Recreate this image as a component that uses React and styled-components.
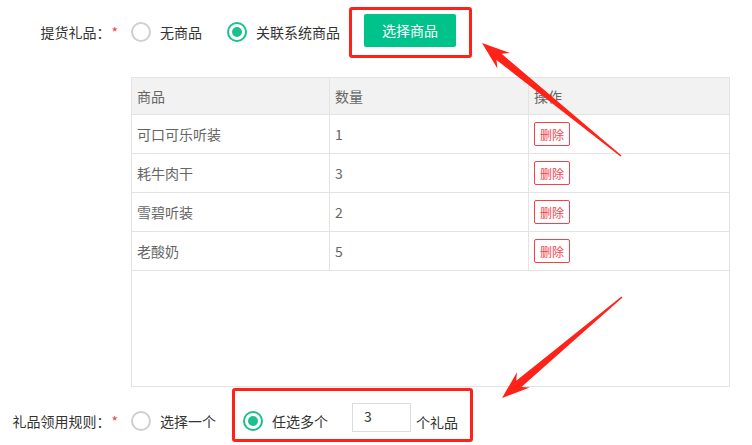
import React from 'react'
import styled, { createGlobalStyle } from 'styled-components'

const GlobalStyle = createGlobalStyle`
    body {
        margin: 0;
        background: #fff;
        font-family: 'Noto Sans CJK SC', 'Noto Sans', sans-serif;
        font-size: 14px;
        color: #333;
    }
`
const Page = styled.div`
    position: relative;
    width: 752px;
    height: 445px;
    overflow: hidden;
`
const TopRow = styled.div`
    display: flex;
    align-items: center;
    height: 64px;
`
const BottomRow = styled.div`
    display: flex;
    align-items: center;
    height: 54px;
    margin-top: 1px;
`
const Label = styled.div`
    width: 131px;
    box-sizing: border-box;
    padding-right: 13px;
    text-align: right;
    line-height: 20px;
    white-space: nowrap;
    margin-top: ${(p) => p.$offset || 0}px;
`
const Star = styled.span`
    color: #f5414a;
    margin-left: 1px;
    position: relative;
    top: 0;
`
const Option = styled.label`
    display: flex;
    align-items: center;
    gap: 9px;
    line-height: 20px;
    margin-right: ${(p) => p.$gap || 0}px;
    margin-top: ${(p) => p.$offset || 0}px;
    white-space: nowrap;
`
const Circle = styled.span`
    width: 20px;
    height: 20px;
    box-sizing: border-box;
    border-radius: 50%;
    border: 2px solid ${(p) => (p.$checked ? '#1dbf8d' : '#cfcfcf')};
    display: flex;
    align-items: center;
    justify-content: center;
    &::after {
        content: '';
        width: 10px;
        height: 10px;
        border-radius: 50%;
        background: ${(p) => (p.$checked ? '#1dbf8d' : 'transparent')};
    }
`
const Highlight = styled.div`
    display: flex;
    align-items: center;
    border: 3px solid #ff2218;
    border-radius: 3px;
    padding: ${(p) => p.$pad};
`
const GreenButton = styled.button`
    width: 92px;
    height: 33px;
    border: none;
    border-radius: 2px;
    background: #00c28b;
    color: #fff;
    font-family: inherit;
    font-size: 14px;
`
const TableBox = styled.div`
    margin: 13px 0 0 131px;
    width: 599px;
    height: 310px;
    box-sizing: border-box;
    border: 1px solid #e3e3e3;
`
const Grid = styled.div`
    display: grid;
    grid-template-columns: 198px 199px 1fr;
`
const Cell = styled.div`
    height: ${(p) => (p.$head ? 37 : 39)}px;
    box-sizing: border-box;
    display: flex;
    align-items: center;
    padding-left: 5px;
    color: #666;
    background: ${(p) => (p.$head ? '#f2f2f2' : '#fff')};
    border-bottom: 1px solid #e3e3e3;
    border-right: ${(p) => (p.$last ? 'none' : '1px solid #e3e3e3')};
`
const DeleteButton = styled.button`
    width: 36px;
    height: 24px;
    padding: 0;
    border: 1px solid #f5414a;
    border-radius: 2px;
    background: #fff;
    color: #f5414a;
    font-family: inherit;
    font-size: 12px;
`
const CountInput = styled.input`
    width: 59px;
    height: 29px;
    box-sizing: border-box;
    border: 1px solid #dcdcdc;
    padding: 0 0 4px 11px;
    margin: 0 5px 7px 24px;
    font-family: inherit;
    font-size: 14px;
    color: #333;
    outline: none;
`
const Note = styled.span`
    line-height: 20px;
    margin-top: 1px;
`
const Overlay = styled.svg`
    position: absolute;
    left: 0;
    top: 0;
    pointer-events: none;
`

const goods = [
    { name: '可口可乐听装', count: 1 },
    { name: '耗牛肉干', count: 3 },
    { name: '雪碧听装', count: 2 },
    { name: '老酸奶', count: 5 },
]

// tapered annotation arrow, tip first
const arrowPoints = (tip, tail) => {
    const dx = tail[0] - tip[0]
    const dy = tail[1] - tip[1]
    const len = Math.hypot(dx, dy)
    const ux = dx / len
    const uy = dy / len
    const nx = -uy
    const ny = ux
    const at = (d, w) => [tip[0] + ux * d + nx * w, tip[1] + uy * d + ny * w]
    const pts = [
        tip,
        at(28, 10),
        at(22, 4),
        at(len, 0.8),
        at(len, -0.8),
        at(22, -4),
        at(28, -10),
    ]
    return pts.map((p) => p.join(',')).join(' ')
}

const Radio = ({ checked, children, gap, offset }) => (
    <Option $gap={gap} $offset={offset}>
        <Circle $checked={checked} />
        {children}
    </Option>
)

export default function App() {
    return (
        <Page>
            <GlobalStyle />
            <TopRow>
                <Label>
                    提货礼品：<Star>*</Star>
                </Label>
                <Radio gap={25}>无商品</Radio>
                <Radio checked gap={9}>
                    关联系统商品
                </Radio>
                <Highlight $pad="4px 13px 8px 12px">
                    <GreenButton>选择商品</GreenButton>
                </Highlight>
            </TopRow>
            <TableBox>
                <Grid>
                    <Cell $head>商品</Cell>
                    <Cell $head>数量</Cell>
                    <Cell $head $last>
                        操作
                    </Cell>
                    {goods.map((g) => (
                        <React.Fragment key={g.name}>
                            <Cell>{g.name}</Cell>
                            <Cell>{g.count}</Cell>
                            <Cell $last>
                                <DeleteButton>删除</DeleteButton>
                            </Cell>
                        </React.Fragment>
                    ))}
                </Grid>
            </TableBox>
            <BottomRow>
                <Label $offset={12}>
                    礼品领用规则：<Star>*</Star>
                </Label>
                <Radio gap={16} offset={12}>
                    选择一个
                </Radio>
                <Highlight $pad="12px 12px 0 8px">
                    <Radio checked>任选多个</Radio>
                    <CountInput defaultValue="3" />
                    <Note>个礼品</Note>
                </Highlight>
            </BottomRow>
            <Overlay width="752" height="445" viewBox="0 0 752 445">
                <polygon points={arrowPoints([482, 43], [621, 156])} fill="#ff2218" />
                <polygon points={arrowPoints([502, 398], [622, 297])} fill="#ff2218" />
            </Overlay>
        </Page>
    )
}
